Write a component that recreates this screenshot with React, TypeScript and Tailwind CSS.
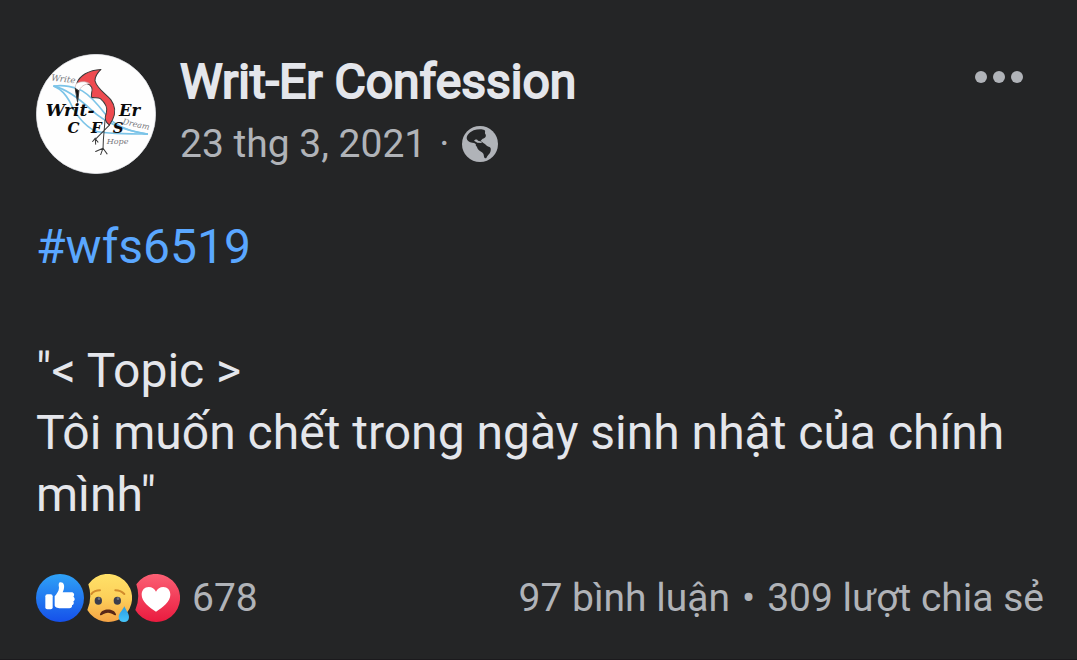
const serif = 'DejaVu Serif, serif';

function Avatar() {
  return (
    <svg className="size-[120px] shrink-0" viewBox="30 29 358 358" role="img" aria-label="Writ-Er Confession">
      <circle cx="209" cy="208" r="178" fill="#fefefe" stroke="#e4e6ea" strokeWidth="2" />
      {/* Feather lines */}
      <g fill="none" stroke="#7cc4e8" strokeWidth="5" strokeLinecap="round">
        <path d="M84 125 C110 121 145 126 168 139 C200 158 222 190 248 222 C275 247 320 262 362 268" />
        <path d="M84 125 C108 136 118 150 130 170 C146 205 170 240 205 258 C225 267 290 267 362 268" />
        <path d="M84 125 C125 135 165 168 195 196 C225 224 270 254 362 268" />
      </g>
      {/* Crane */}
      <g stroke="#3a3a3a" strokeWidth="3" strokeLinejoin="round" strokeLinecap="round">
        <path
          d="M152 116 C160 94 186 77 224 75 C212 86 206 98 206 109 C212 132 238 148 253 165 C267 184 268 206 258 226 L249 241 C238 234 234 220 240 204 C244 190 236 174 222 162 C212 157 202 162 196 158 C192 148 201 138 196 128 C188 113 170 116 152 116 Z"
          fill="#ee4b50"
        />
        <path d="M152 116 C146 122 146 132 151 140 L157 140 C164 126 174 119 190 117 C178 110 164 110 152 116 Z" fill="#fff" stroke="#c9a9a9" strokeWidth="2" />
        <path d="M147 132 L154 173 L158 139 Z" fill="#111" />
        <path d="M236 226 L231 285 L230 310 M249 241 L207 284" fill="none" />
        <path d="M230 310 L208 320 M230 310 L223 329 M230 310 L242 327 M207 280 L199 290 M207 284 L208 298 M207 282 L215 292" fill="none" />
      </g>
      <g fontFamily={serif} fontStyle="italic" fill="#0a0a0a" fontWeight="bold">
        <text x="59" y="214" fontSize="51">Writ-</text>
        <text x="278" y="214" fontSize="49">Er</text>
        <text x="124" y="266" fontSize="45">C</text>
        <text x="194" y="266" fontSize="45">F</text>
        <text x="259" y="266" fontSize="45">S</text>
      </g>
      <g fontFamily={serif} fontStyle="italic" fill="#77777c" fontSize="26">
        <text transform="translate(75 108) rotate(7)">Write</text>
        <text transform="translate(287 238) rotate(12)" fontSize="24">Dream</text>
        <text x="241" y="297" fontSize="24">Hope</text>
      </g>
    </svg>
  );
}

function GlobeIcon() {
  return (
    <svg className="size-9" viewBox="36 29 108 108" role="img" aria-label="Công khai">
      <circle cx="90" cy="83" r="54" fill="#b0b3b8" />
      <path
        d="M50 66 C51 54 60 47 71 42 C82 38 96 37 103 41 C108 45 103 50 106 53 C110 59 106 66 98 67 L92 73 L100 80 C108 83 108 89 116 91 C124 92 123 101 121 107 C119 114 112 117 109 125 C103 128 102 122 101 115 C100 108 90 106 86 101 C81 96 81 90 77 87 C80 83 75 80 67 79 C58 78 51 74 50 66 Z"
        fill="#242526"
      />
      <path d="M72 73 C77 67 82 69 84 73 L96 76 L94 80 L82 79 Z" fill="#b0b3b8" />
    </svg>
  );
}

function LikeIcon() {
  return (
    <svg className="size-12" viewBox="30 41 144 144" role="img" aria-label="Thích">
      <defs>
        <linearGradient id="like" x1="0" y1="0" x2="0" y2="1">
          <stop offset="0" stopColor="#2fa2f7" />
          <stop offset="1" stopColor="#1550ea" />
        </linearGradient>
      </defs>
      <circle cx="102" cy="113" r="72" fill="url(#like)" />
      <rect x="58" y="102" width="22" height="45" rx="6" fill="#fff" />
      <path
        d="M86 108 C92 100 99 92 99 82 C97 72 98 66 103 66 C113 65 117 76 113 88 L110 96 H136 C144 96 147 104 142 109 C148 113 147 121 142 123 C145 128 143 134 138 135 C139 141 135 144 130 144 H103 C94 144 86 141 86 135 Z"
        fill="#fff"
      />
    </svg>
  );
}

function SadIcon() {
  return (
    <svg className="size-12" viewBox="174 41 144 144" role="img" aria-label="Buồn">
      <defs>
        <linearGradient id="sad" x1="0" y1="0" x2="0" y2="1">
          <stop offset="0" stopColor="#ffe168" />
          <stop offset="0.5" stopColor="#fdd05a" />
          <stop offset="1" stopColor="#f5a344" />
        </linearGradient>
        <linearGradient id="tear" x1="0" y1="0" x2="0" y2="1">
          <stop offset="0" stopColor="#2b9be0" />
          <stop offset="1" stopColor="#45c5fa" />
        </linearGradient>
      </defs>
      <path d="M187 72 A72 72 0 1 1 184 149 A110 110 0 0 0 187 72 Z" fill="url(#sad)" />
      <g fill="none" stroke="#d18b2c" strokeWidth="6" strokeLinecap="round">
        <path d="M196 101 C203 93 211 90 222 90" />
        <path d="M268 90 C279 90 288 94 295 101" />
      </g>
      <ellipse cx="217" cy="121" rx="11" ry="12" fill="#3c3d4c" />
      <ellipse cx="274" cy="121" rx="11" ry="12" fill="#3c3d4c" />
      <circle cx="219" cy="115" r="4" fill="#6d7383" />
      <circle cx="276" cy="115" r="4" fill="#6d7383" />
      <path d="M222 162 C227 143 265 143 270 162 C271 167 266 165 261 162 C251 156 241 156 231 162 C226 165 221 167 222 162 Z" fill="#5a2717" />
      <path d="M295 138 C300 150 309 159 309 170 C309 180 303 185 294 185 C284 185 278 180 278 170 C278 159 290 150 295 138 Z" fill="url(#tear)" />
    </svg>
  );
}

function LoveIcon() {
  return (
    <svg className="size-12" viewBox="318 41 144 144" role="img" aria-label="Yêu thích">
      <defs>
        <linearGradient id="love" x1="0" y1="0" x2="0" y2="1">
          <stop offset="0" stopColor="#fb6074" />
          <stop offset="1" stopColor="#ea1b3f" />
        </linearGradient>
      </defs>
      <path d="M331 72 A72 72 0 1 1 328 149 A110 110 0 0 0 331 72 Z" fill="url(#love)" />
      <path
        d="M390 154 C370 141 347 124 347 103 C347 89 356 80 368 80 C378 80 386 86 390 94 C394 86 402 80 412 80 C424 80 433 89 433 103 C433 124 410 141 390 154 Z"
        fill="#fff"
      />
    </svg>
  );
}

export default function App() {
  return (
    <article className="min-h-screen border-b border-[#1b1a1d] bg-[#242526] pt-[54px] pr-[33px] pb-7 pl-9 font-[Roboto,'Noto_Sans',sans-serif] text-[#e4e6eb]">
      <header className="flex items-start">
        <Avatar />
        <div className="ml-6 flex-1">
          <h1 className="text-[48px] leading-[56px] font-normal [-webkit-text-stroke:2px_#e4e6eb]">Writ-Er Confession</h1>
          <div className="mt-1.5 flex items-center gap-[13px] text-[39px] leading-[56px] text-[#b0b3b8]">
            <time dateTime="2021-03-23">23 thg 3, 2021</time>
            <span>·</span>
            <GlobeIcon />
          </div>
        </div>
        <button type="button" aria-label="Tùy chọn khác" className="mt-[17px] mr-[21px] flex gap-[6px]">
          <span className="size-3 rounded-full bg-[#b0b3b8]" />
          <span className="size-3 rounded-full bg-[#b0b3b8]" />
          <span className="size-3 rounded-full bg-[#b0b3b8]" />
        </button>
      </header>

      {/* Post text */}
      <div className="mt-[42px] text-[48px] leading-[62px]">
        <a href="#wfs6519" className="text-[#5aa7ff]">#wfs6519</a>
        <p className="mt-[62px]">
          "&lt; Topic &gt;
          <br />
          Tôi muốn chết trong ngày sinh nhật của chính mình"
        </p>
      </div>

      {/* Reactions and counts */}
      <footer className="mt-11 flex items-center justify-between text-[39px] leading-[56px] text-[#b0b3b8]">
        <div className="flex items-center">
          <LikeIcon />
          <SadIcon />
          <LoveIcon />
          <span className="ml-3">678</span>
        </div>
        <div className="flex gap-3">
          <span>97 bình luận</span>
          <span>•</span>
          <span>309 lượt chia sẻ</span>
        </div>
      </footer>
    </article>
  );
}
